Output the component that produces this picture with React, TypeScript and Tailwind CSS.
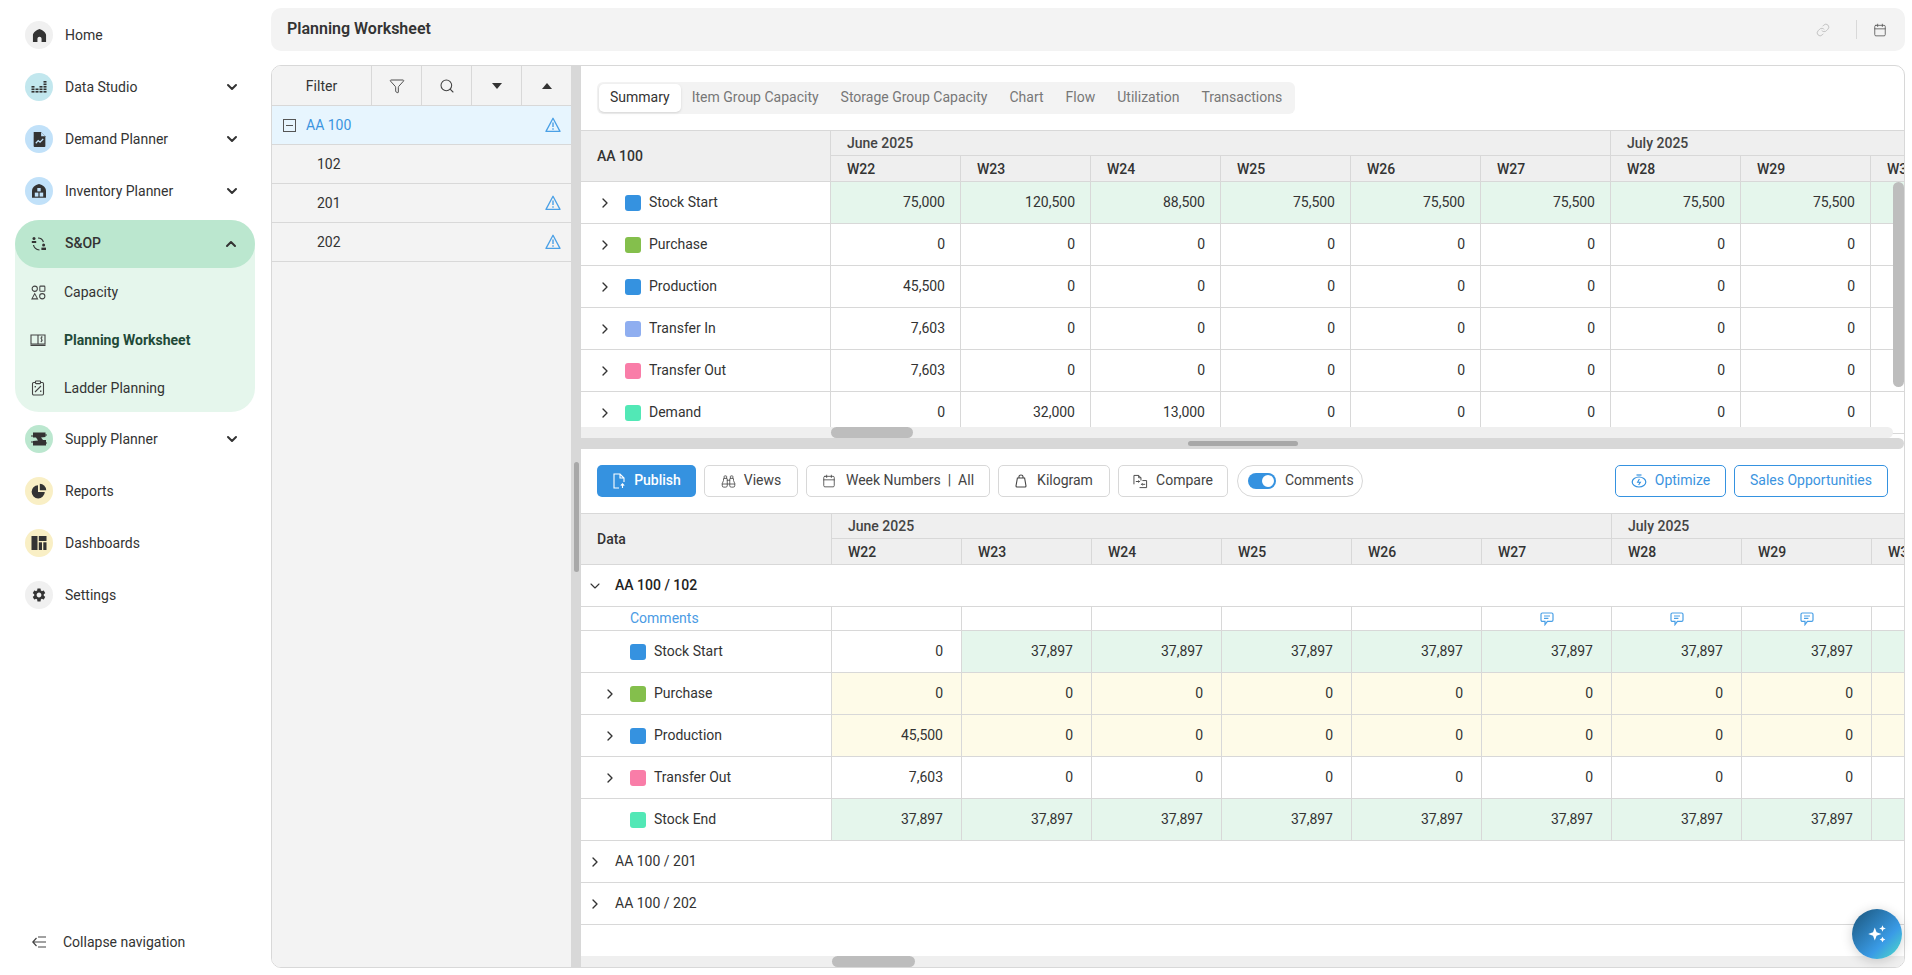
import { ChevronDown, ChevronRight, ChevronUp, Link, Calendar, Search, Funnel, Binoculars } from 'lucide-react';
import type { ReactNode } from 'react';

const weeks = ['W22', 'W23', 'W24', 'W25', 'W26', 'W27', 'W28', 'W29', 'W30'];

const BLUE = 'bg-[#3592e0]';
const GREEN = 'bg-[#84bf4c]';
const PERI = 'bg-[#8faef0]';
const PINK = 'bg-[#f97da8]';
const TEAL = 'bg-[#52e8b6]';

function zeros(first: string, second = '0', third = '0') {
  return [first, second, third, '0', '0', '0', '0', '0', ''];
}

const summaryRows = [
  { name: 'Stock Start', color: BLUE, values: ['75,000', '120,500', '88,500', '75,500', '75,500', '75,500', '75,500', '75,500', ''], tint: true },
  { name: 'Purchase', color: GREEN, values: zeros('0') },
  { name: 'Production', color: BLUE, values: zeros('45,500') },
  { name: 'Transfer In', color: PERI, values: zeros('7,603') },
  { name: 'Transfer Out', color: PINK, values: zeros('7,603') },
  { name: 'Demand', color: TEAL, values: zeros('0', '32,000', '13,000') },
];

const tabs = ['Item Group Capacity', 'Storage Group Capacity', 'Chart', 'Flow', 'Utilization', 'Transactions'];

function HomeIcon() {
  return (
    <svg viewBox="0 0 16 16" className="h-[15px] w-[15px] fill-[#333]">
      <path d="M8 1 C4.5 2.2 1.2 4.6 1 7.5 V15 H5.8 V11.5 C5.8 10.2 6.8 9.4 8 9.4 C9.2 9.4 10.2 10.2 10.2 11.5 V15 H15 V7.5 C14.8 4.6 11.5 2.2 8 1Z" />
    </svg>
  );
}

function BarsIcon() {
  return (
    <svg viewBox="0 0 16 16" className="h-4 w-4 fill-[#333]">
      <rect x="0.5" y="7" width="3" height="1.6" /><rect x="0.5" y="9.5" width="3" height="1.6" /><rect x="0.5" y="12" width="3" height="1.6" />
      <rect x="4.5" y="9.5" width="3" height="1.6" /><rect x="4.5" y="12" width="3" height="1.6" />
      <rect x="8.5" y="7" width="3" height="1.6" /><rect x="8.5" y="9.5" width="3" height="1.6" /><rect x="8.5" y="12" width="3" height="1.6" />
      <rect x="12.5" y="2" width="3" height="1.6" /><rect x="12.5" y="4.5" width="3" height="1.6" /><rect x="12.5" y="7" width="3" height="1.6" /><rect x="12.5" y="9.5" width="3" height="1.6" /><rect x="12.5" y="12" width="3" height="1.6" />
    </svg>
  );
}

function DemandIcon() {
  return (
    <svg viewBox="0 0 16 16" className="h-[17px] w-[17px]">
      <path className="fill-[#333]" d="M2.5 1 H9.5 L13.5 5 V14 C13.5 14.6 13 15 12.5 15 H3.5 C3 15 2.5 14.6 2.5 14Z" />
      <path d="M4.5 11.5 L6.8 9 L8.5 10.5 L11.5 7.5" className="fill-none stroke-[#c1e1f9]" strokeWidth="1.2" />
      <path d="M9.5 1 V5 H13.5" className="fill-[#c1e1f9]" />
    </svg>
  );
}

function InventoryIcon() {
  return (
    <svg viewBox="0 0 16 16" className="h-4 w-4">
      <path className="fill-[#333]" d="M8 1 C4 1.8 1 4.6 1 8 V14.8 H15 V8 C15 4.6 12 1.8 8 1Z" />
      <rect x="6.3" y="5" width="3.4" height="3.4" className="fill-[#c1e1f9]" />
      <rect x="3.8" y="9.6" width="3.6" height="4" className="fill-[#c1e1f9]" />
      <rect x="8.6" y="9.6" width="3.6" height="4" className="fill-[#c1e1f9]" />
    </svg>
  );
}

function SopIcon() {
  return (
    <svg viewBox="0 0 16 16" className="h-4 w-4">
      <circle cx="3" cy="2.4" r="1.5" className="fill-[#333]" />
      <path d="M0.8 5 H5.2 V7 H0.8Z" className="fill-[#333]" />
      <circle cx="12.6" cy="9" r="1.5" className="fill-[#333]" />
      <path d="M10.4 11.6 H15 V14 H10.4Z" className="fill-[#333]" />
      <path d="M7 2 C9.5 2 11.6 3.5 12.4 6 M2.5 9 C3 11.5 5.2 13.6 8.5 14" className="fill-none stroke-[#333]" strokeWidth="1.2" />
    </svg>
  );
}

function SupplyIcon() {
  return (
    <svg viewBox="0 0 18 16" className="h-[18px] w-[18px]">
      <path className="fill-[#333]" d="M3 1.5 H15.5 V6 L11 6.5 L13 9 H16 V14.5 H3 V10 L8 9.5 L6 6.5 H3Z" />
      <path d="M1 5 H7 M11 4 H17 M1 11 H7 M11 12 H17" className="fill-none stroke-[#333]" strokeWidth="1" />
    </svg>
  );
}

function PieIcon() {
  return (
    <svg viewBox="0 0 16 16" className="h-4 w-4 fill-[#333]">
      <path d="M7 2.2 A6.6 6.6 0 1 0 13.8 9 H7Z" />
      <path d="M8.8 0.8 A6.4 6.4 0 0 1 15.2 7.2 H8.8Z" />
    </svg>
  );
}

function DashIcon() {
  return (
    <svg viewBox="0 0 16 16" className="h-4 w-4 fill-[#333]">
      <rect x="0.5" y="1" width="6" height="14" />
      <rect x="7.8" y="1" width="7.7" height="5" />
      <rect x="7.8" y="7.3" width="3.2" height="7.7" />
      <rect x="12.3" y="7.3" width="3.2" height="7.7" />
    </svg>
  );
}

function GearIcon() {
  return (
    <svg viewBox="0 0 24 24" className="h-4 w-4 fill-[#333]">
      <path d="M19.14 12.94c.04-.3.06-.61.06-.94 0-.32-.02-.64-.07-.94l2.03-1.58a.49.49 0 0 0 .12-.61l-1.92-3.32a.488.488 0 0 0-.59-.22l-2.39.96c-.5-.38-1.03-.7-1.62-.94l-.36-2.54a.484.484 0 0 0-.48-.41h-3.84c-.24 0-.43.17-.47.41l-.36 2.54c-.59.24-1.13.57-1.62.94l-2.39-.96c-.22-.08-.47 0-.59.22L2.74 8.87c-.12.21-.08.47.12.61l2.03 1.58c-.05.3-.09.63-.09.94s.02.64.07.94l-2.03 1.58a.49.49 0 0 0-.12.61l1.92 3.32c.12.22.37.29.59.22l2.39-.96c.5.38 1.03.7 1.62.94l.36 2.54c.05.24.24.41.48.41h3.84c.24 0 .44-.17.47-.41l.36-2.54c.59-.24 1.13-.56 1.62-.94l2.39.96c.22.08.47 0 .59-.22l1.92-3.32c.12-.22.07-.47-.12-.61l-2.01-1.58zM12 15.6c-1.98 0-3.6-1.62-3.6-3.6s1.62-3.6 3.6-3.6 3.6 1.62 3.6 3.6-1.62 3.6-3.6 3.6z" />
    </svg>
  );
}

function CapacityIcon() {
  return (
    <svg viewBox="0 0 16 16" className="h-[15px] w-[15px] fill-none stroke-[#444]" strokeWidth="1.1">
      <circle cx="4" cy="4" r="2.8" />
      <rect x="9.4" y="1.2" width="5.4" height="5.4" rx="0.8" />
      <path d="M4 9.2 L7 14.8 H1Z" />
      <circle cx="12" cy="12" r="2.8" />
    </svg>
  );
}

function BookIcon() {
  return (
    <svg viewBox="0 0 16 12" className="h-[14px] w-4 fill-none stroke-[#444]" strokeWidth="1.1">
      <path d="M1 1 H8 V10 H1Z M8 1 H15 V10 H8Z" />
      <path d="M0.5 11.3 H15.5" strokeWidth="1.4" />
      <path d="M12.6 3 C11 2.6 10.4 4.6 11.5 5.2 C12.6 5.8 12.6 7.8 10.6 7.4 M11.6 2.2 V8.2" strokeWidth="0.8" />
    </svg>
  );
}

function LadderIcon() {
  return (
    <svg viewBox="0 0 14 16" className="h-4 w-[14px] fill-none stroke-[#444]" strokeWidth="1.1">
      <rect x="1.5" y="2.5" width="11" height="12.5" rx="1.2" />
      <rect x="4.5" y="1" width="5" height="2.6" rx="0.6" className="fill-[#e5f6ec]" />
      <path d="M4 12 L10 6" />
      <rect x="3.6" y="6" width="1.4" height="1.4" className="fill-[#444]" strokeWidth="0" />
      <rect x="9" y="10.5" width="1.4" height="1.4" className="fill-[#444]" strokeWidth="0" />
    </svg>
  );
}

function CollapseIcon() {
  return (
    <svg viewBox="0 0 16 12" className="h-3 w-4 fill-none stroke-[#444]" strokeWidth="1.2">
      <path d="M4.5 2 L0.8 6 L4.5 10 M1 6 H14 M6 1 H14 M6 11 H14" />
    </svg>
  );
}

function WarnIcon() {
  return (
    <svg viewBox="0 0 16 16" className="h-4 w-4 fill-none stroke-[#4aa0e6]" strokeWidth="1.3">
      <path d="M8 1.2 L15 14.4 H1Z" strokeLinejoin="round" />
      <path d="M8 5.5 V10 M8 11.2 V12.8" strokeWidth="1.4" />
    </svg>
  );
}

function CommentIcon() {
  return (
    <svg viewBox="0 0 14 14" className="h-[14px] w-[14px] fill-none stroke-[#4aa0e6]" strokeWidth="1.2">
      <path d="M2.4 1 H11.6 C12.4 1 13 1.6 13 2.4 V8 C13 8.8 12.4 9.4 11.6 9.4 H7.4 L5 12.6 V9.4 H2.4 C1.6 9.4 1 8.8 1 8 V2.4 C1 1.6 1.6 1 2.4 1Z" />
      <path d="M4 4 H10 M4 6.4 H8.4" />
    </svg>
  );
}

function OptimizeIcon() {
  return (
    <svg viewBox="0 0 16 14" className="h-[14px] w-4 fill-none stroke-[#3592e0]" strokeWidth="1.2">
      <ellipse cx="8" cy="8" rx="6.8" ry="5" />
      <path d="M5.5 1 H10.5" />
      <path d="M8.4 5 L6.6 8.2 H9.4 L7.6 11" strokeWidth="1.1" />
    </svg>
  );
}

function PublishIcon() {
  return (
    <svg viewBox="0 0 14 16" className="h-4 w-[14px] fill-none stroke-white" strokeWidth="1.1">
      <path d="M7 15 H2 V1 H8 L12 5 V9 M8 1 V5 H12" />
      <path d="M10.5 15 V11 M8.8 12.6 L10.5 10.8 L12.2 12.6" />
    </svg>
  );
}

function BagIcon() {
  return (
    <svg viewBox="0 0 12 14" className="h-[14px] w-3 fill-none stroke-[#444]" strokeWidth="1.1">
      <path d="M2.4 4 H9.6 L11 12 C11 12.7 10.6 13 10 13 H2 C1.4 13 1 12.7 1 12Z" />
      <path d="M4 4 V2.6 C4 1.6 4.8 1 6 1 C7.2 1 8 1.6 8 2.6 V4" />
    </svg>
  );
}

function CompareIcon() {
  return (
    <svg viewBox="0 0 16 16" className="h-[15px] w-[15px] fill-none stroke-[#444]" strokeWidth="1">
      <path d="M1 11 V1.5 H6 L8.5 4 V7 M6 1.5 V4 H8.5" />
      <path d="M7 14.5 H14.5 V7 H10" />
      <path d="M3 8 H7 M5.8 6.8 L7 8 L5.8 9.2 M13 11 H9 M10.2 9.8 L9 11 L10.2 12.2" />
    </svg>
  );
}

function SparkIcon() {
  return (
    <svg viewBox="0 0 20 20" className="h-[22px] w-[22px] fill-white">
      <path d="M8 4 L9.6 8.4 L14 10 L9.6 11.6 L8 16 L6.4 11.6 L2 10 L6.4 8.4Z" />
      <path d="M15 2 L15.8 4.2 L18 5 L15.8 5.8 L15 8 L14.2 5.8 L12 5 L14.2 4.2Z" />
      <path d="M15 12.5 L15.8 14.2 L17.6 15 L15.8 15.8 L15 17.5 L14.2 15.8 L12.4 15 L14.2 14.2Z" />
    </svg>
  );
}

function NavItem({ icon, bg, label, chevron }: { icon: ReactNode; bg: string; label: string; chevron?: boolean }) {
  return (
    <div className="flex h-[52px] items-center pl-[25px] pr-[31px]">
      <span className={`flex h-7 w-7 items-center justify-center rounded-full ${bg}`}>{icon}</span>
      <span className="ml-3 flex-1 text-sm text-[#333]">{label}</span>
      {chevron && <ChevronDown className="h-4 w-4 text-[#333]" strokeWidth={3} />}
    </div>
  );
}

function SubItem({ icon, label, active }: { icon: ReactNode; label: string; active?: boolean }) {
  return (
    <div className="flex h-12 items-center pl-[15px]">
      <span className="flex w-4 justify-center">{icon}</span>
      <span className={`ml-[18px] text-sm ${active ? 'font-bold text-[#1f4a38]' : 'text-[#333]'}`}>{label}</span>
    </div>
  );
}

function Sidebar() {
  return (
    <aside className="flex w-[271px] shrink-0 flex-col pt-[9px]">
      <NavItem icon={<HomeIcon />} bg="bg-[#f0f0f0]" label="Home" />
      <NavItem icon={<BarsIcon />} bg="bg-[#c2e7ee]" label="Data Studio" chevron />
      <NavItem icon={<DemandIcon />} bg="bg-[#c1e1f9]" label="Demand Planner" chevron />
      <NavItem icon={<InventoryIcon />} bg="bg-[#c1e1f9]" label="Inventory Planner" chevron />
      <div className="ml-[15px] mr-4 mt-[3px] h-[192px] rounded-[24px] bg-[#e5f6ec]">
        <div className="flex h-12 items-center rounded-[24px] bg-[#bbe7cf] pl-[16px] pr-4">
          <span className="flex w-4 justify-center"><SopIcon /></span>
          <span className="mb-[2px] ml-[18px] flex-1 text-sm font-medium text-[#333]">S&amp;OP</span>
          <ChevronUp className="h-4 w-4 text-[#333]" strokeWidth={3} />
        </div>
        <SubItem icon={<CapacityIcon />} label="Capacity" />
        <SubItem icon={<BookIcon />} label="Planning Worksheet" active />
        <SubItem icon={<LadderIcon />} label="Ladder Planning" />
      </div>
      <div className="mt-px">
        <NavItem icon={<SupplyIcon />} bg="bg-[#bbe7cf]" label="Supply Planner" chevron />
        <NavItem icon={<PieIcon />} bg="bg-[#f9efc5]" label="Reports" />
        <NavItem icon={<DashIcon />} bg="bg-[#f9efc5]" label="Dashboards" />
        <NavItem icon={<GearIcon />} bg="bg-[#f0f0f0]" label="Settings" />
      </div>
      <div className="mt-auto mb-[23px] flex h-5 items-center pl-[32px]">
        <CollapseIcon />
        <span className="ml-[15px] text-sm text-[#333]">Collapse navigation</span>
      </div>
    </aside>
  );
}

function TreePanel() {
  const headCell = 'flex w-[50px] shrink-0 items-center justify-center border-l border-[#d8d8d8] text-[#444]';
  return (
    <div className="flex w-[299px] shrink-0 flex-col bg-[#f3f3f3]">
      <div className="flex h-[40px] shrink-0 border-b border-[#d8d8d8] text-sm text-[#333]">
        <div className="flex w-[99px] shrink-0 items-center justify-center">Filter</div>
        <div className={headCell}><Funnel className="h-4 w-4" strokeWidth={1.4} /></div>
        <div className={headCell}><Search className="h-4 w-4" strokeWidth={1.6} /></div>
        <div className={headCell}><span className="h-0 w-0 border-x-[5px] border-t-[6px] border-x-transparent border-t-[#333]" /></div>
        <div className={headCell}><span className="h-0 w-0 border-x-[5px] border-b-[6px] border-x-transparent border-b-[#333]" /></div>
      </div>
      <div className="flex h-[39px] shrink-0 items-center border-b border-[#d8d8d8] bg-[#e7f5fe] pl-[11px] pr-[10px] text-sm text-[#3b94e0]">
        <span className="flex h-[13px] w-[13px] items-center justify-center border border-[#555]">
          <span className="h-px w-[7px] bg-[#555]" />
        </span>
        <span className="mb-px ml-[10px] flex-1">AA 100</span>
        <WarnIcon />
      </div>
      {[
        ['102', false],
        ['201', true],
        ['202', true],
      ].map(([label, warn]) => (
        <div key={String(label)} className="flex h-[39px] shrink-0 items-center border-b border-[#d8d8d8] pl-[45px] pr-[10px] text-sm text-[#333]">
          <span className="mb-px flex-1">{label}</span>
          {warn && <WarnIcon />}
        </div>
      ))}
    </div>
  );
}

function GridHead({ label, labelWidth }: { label: string; labelWidth: string }) {
  return (
    <div className="flex h-[52px] shrink-0 border-y border-[#d8d8d8] bg-[#efefef] text-sm font-medium text-[#333]">
      <div className={`flex shrink-0 items-center pl-4 ${labelWidth}`}>{label}</div>
      <div className="flex flex-col">
        <div className="flex h-[25px] border-b border-[#d8d8d8] text-[#444]">
          <div className="flex w-[780px] shrink-0 items-center border-l border-[#d8d8d8] pl-4">June 2025</div>
          <div className="flex w-[520px] shrink-0 items-center border-l border-[#d8d8d8] pl-4">July 2025</div>
        </div>
        <div className="flex flex-1">
          {weeks.map((w) => (
            <div key={w} className="flex w-[130px] shrink-0 items-center border-l border-[#d8d8d8] pl-4">{w}</div>
          ))}
        </div>
      </div>
    </div>
  );
}

function Caret({ className = '' }: { className?: string }) {
  return <ChevronRight className={`h-4 w-4 shrink-0 text-[#333] ${className}`} strokeWidth={2} />;
}

function Cells({ values, bg, pad }: { values: string[]; bg: (i: number) => string; pad: string }) {
  return (
    <>
      {values.map((v, i) => (
        <div key={i} className={`flex w-[130px] shrink-0 items-center justify-end border-l border-[#d8d8d8] pb-[2px] ${pad} ${bg(i)}`}>
          {v}
        </div>
      ))}
    </>
  );
}

function SummaryGrid() {
  return (
    <div className="relative h-[308px] shrink-0 overflow-hidden">
      <GridHead label="AA 100" labelWidth="w-[249px]" />
      {summaryRows.map((row) => (
        <div key={row.name} className="flex h-[42px] border-b border-[#d8d8d8] text-sm text-[#333]">
          <div className="flex w-[249px] shrink-0 items-center pl-4">
            <Caret />
            <span className={`ml-3 h-4 w-4 rounded-[3px] ${row.color}`} />
            <span className="mb-[2px] ml-2">{row.name}</span>
          </div>
          <Cells values={row.values} pad="pr-[15px]" bg={() => (row.tint ? 'bg-[#e5f6ec]' : '')} />
        </div>
      ))}
      {/* scrollbars */}
      <div className="absolute bottom-0 left-0 h-[11px] w-[1312px] rounded-r-full bg-[#efefef]">
        <div className="ml-[250px] h-full w-[82px] rounded-full bg-[#bdbdbd]" />
      </div>
      <div className="absolute right-0 top-[52px] h-[205px] w-[11px] rounded-full bg-[#bdbdbd]" />
    </div>
  );
}

function ToolButton({ icon, children, className = '' }: { icon?: ReactNode; children: ReactNode; className?: string }) {
  return (
    <div className={`flex h-8 items-center justify-center gap-2 rounded-[5px] border border-[#d8d8d8] text-sm text-[#444] ${className}`}>
      {icon}
      <span className="mb-[2px]">{children}</span>
    </div>
  );
}

function Toolbar() {
  return (
    <div className="flex h-[64px] shrink-0 items-center pl-4 pr-4 text-sm">
      <div className="flex h-8 w-[99px] items-center justify-center gap-2 rounded-[5px] bg-[#3592e0] font-medium text-white">
        <PublishIcon />
        <span className="mb-[2px]">Publish</span>
      </div>
      <ToolButton className="ml-2 w-[94px]" icon={<Binoculars className="h-[15px] w-[15px]" strokeWidth={1.3} />}>Views</ToolButton>
      <ToolButton className="ml-2 w-[184px] gap-[10px]" icon={<Calendar className="h-[14px] w-[14px]" strokeWidth={1.4} />}>
        Week Numbers&nbsp; |&nbsp; All
      </ToolButton>
      <ToolButton className="ml-2 w-[112px] gap-[10px]" icon={<BagIcon />}>Kilogram</ToolButton>
      <ToolButton className="ml-2 w-[110px]" icon={<CompareIcon />}>Compare</ToolButton>
      <div className="ml-[9px] flex h-8 w-[126px] items-center gap-[9px] rounded-full border border-[#d8d8d8] pl-[10px] text-[#444]">
        <span className="flex h-4 w-7 items-center justify-end rounded-full bg-[#3592e0] pr-[2px]">
          <span className="h-3 w-3 rounded-full bg-white" />
        </span>
        <span className="mb-[2px]">Comments</span>
      </div>
      <div className="ml-auto flex h-8 w-[111px] items-center justify-center gap-2 rounded-[5px] border border-[#3592e0] text-[#3b94e0]">
        <OptimizeIcon />
        <span className="mb-[2px]">Optimize</span>
      </div>
      <div className="ml-2 flex h-8 w-[154px] items-center justify-center rounded-[5px] border border-[#3592e0] pb-[2px] text-[#3b94e0]">
        Sales Opportunities
      </div>
    </div>
  );
}

const G = 'bg-[#e5f6ec]';
const Y = 'bg-[#fefbe8]';

const detailRows = [
  { name: 'Stock Start', color: BLUE, caret: false, values: ['0', ...Array(7).fill('37,897'), ''], bg: (i: number) => (i === 0 ? '' : G) },
  { name: 'Purchase', color: GREEN, caret: true, values: zeros('0'), bg: () => Y },
  { name: 'Production', color: BLUE, caret: true, values: zeros('45,500'), bg: () => Y },
  { name: 'Transfer Out', color: PINK, caret: true, values: zeros('7,603'), bg: () => '' },
  { name: 'Stock End', color: TEAL, caret: false, values: [...Array(8).fill('37,897'), ''], bg: () => G },
];

function DetailGrid() {
  return (
    <div className="relative flex-1 overflow-hidden">
      <GridHead label="Data" labelWidth="w-[250px]" />
      <div className="flex h-[42px] items-center border-b border-[#d8d8d8] pl-[6px] text-sm font-medium text-[#222]">
        <ChevronDown className="h-4 w-4 text-[#333]" strokeWidth={1.6} />
        <span className="mb-[2px] ml-[12px]">AA 100 / 102</span>
      </div>
      <div className="flex h-6 border-b border-[#d8d8d8] text-sm">
        <div className="flex w-[250px] shrink-0 items-center pb-[2px] pl-[49px] text-[#4a9be4]">Comments</div>
        {weeks.map((w, i) => (
          <div key={w} className="flex w-[130px] shrink-0 items-center justify-center border-l border-[#d8d8d8]">
            {i >= 5 && i <= 7 && <CommentIcon />}
          </div>
        ))}
      </div>
      {detailRows.map((row) => (
        <div key={row.name} className="flex h-[42px] border-b border-[#d8d8d8] text-sm text-[#333]">
          <div className="flex w-[250px] shrink-0 items-center pl-[21px]">
            <span className="flex w-4 justify-center">{row.caret && <Caret />}</span>
            <span className={`ml-3 h-4 w-4 rounded-[3px] ${row.color}`} />
            <span className="mb-[2px] ml-2">{row.name}</span>
          </div>
          <Cells values={row.values} pad="pr-[18px]" bg={row.bg} />
        </div>
      ))}
      {['AA 100 / 201', 'AA 100 / 202'].map((label) => (
        <div key={label} className="flex h-[42px] items-center border-b border-[#d8d8d8] pl-[6px] text-sm text-[#333]">
          <Caret />
          <span className="mb-[2px] ml-[12px]">{label}</span>
        </div>
      ))}
      <div className="absolute bottom-0 left-0 right-0 h-[11px] bg-[#efefef]">
        <div className="ml-[251px] h-full w-[83px] rounded-full bg-[#bdbdbd]" />
      </div>
    </div>
  );
}

export default function App() {
  return (
    <div className="relative flex h-[975px] w-[1912px] overflow-hidden bg-white font-['Roboto',sans-serif]">
      <Sidebar />
      <main className="flex min-w-0 flex-1 flex-col pb-[7px] pr-[7px] pt-2">
        <header className="flex h-[43px] shrink-0 items-center rounded-[10px] bg-[#f3f3f3] pl-4 pr-[18px]">
          <h1 className="mb-[2px] flex-1 text-base font-semibold text-[#333]">Planning Worksheet</h1>
          <Link className="h-[14px] w-[14px] text-[#bdbdbd]" strokeWidth={1.5} />
          <span className="ml-[26px] mr-4 h-[19px] w-px bg-[#d8d8d8]" />
          <Calendar className="h-[14px] w-[14px] text-[#555]" strokeWidth={1.4} />
        </header>
        <div className="mt-[14px] flex min-h-0 flex-1 overflow-hidden rounded-[10px] border border-[#d8d8d8]">
          <TreePanel />
          <div className="relative w-[10px] shrink-0 bg-[#d8d8d8]">
            <div className="absolute left-[3px] top-[396px] h-[110px] w-[5px] rounded-full bg-[#a8a8a8]" />
          </div>
          <div className="flex min-w-0 flex-1 flex-col">
            <div className="flex h-[64px] shrink-0 items-center pl-4">
              <div className="flex h-8 items-center rounded-[6px] bg-[#f3f3f3] pl-[2px] pr-[2px] text-sm text-[#777]">
                <div className="flex h-7 items-center rounded-[5px] bg-white px-[11px] pb-[2px] text-[#333] shadow-sm">Summary</div>
                {tabs.map((t) => (
                  <div key={t} className="flex h-7 items-center px-[11px] pb-[2px]">{t}</div>
                ))}
              </div>
            </div>
            <SummaryGrid />
            <div className="relative flex h-[11px] shrink-0 items-center justify-center rounded-r-full bg-[#d8d8d8]">
              <div className="h-[5px] w-[110px] rounded-full bg-[#a8a8a8]" />
            </div>
            <Toolbar />
            <DetailGrid />
          </div>
        </div>
      </main>
      <div className="absolute bottom-4 right-[10px] flex h-[50px] w-[50px] items-center justify-center rounded-full bg-[linear-gradient(135deg,#1f5f8a_10%,#3a9be6_65%,#4fe0c4_100%)] shadow-[0_2px_12px_rgba(0,0,0,0.18)]">
        <SparkIcon />
      </div>
    </div>
  );
}
